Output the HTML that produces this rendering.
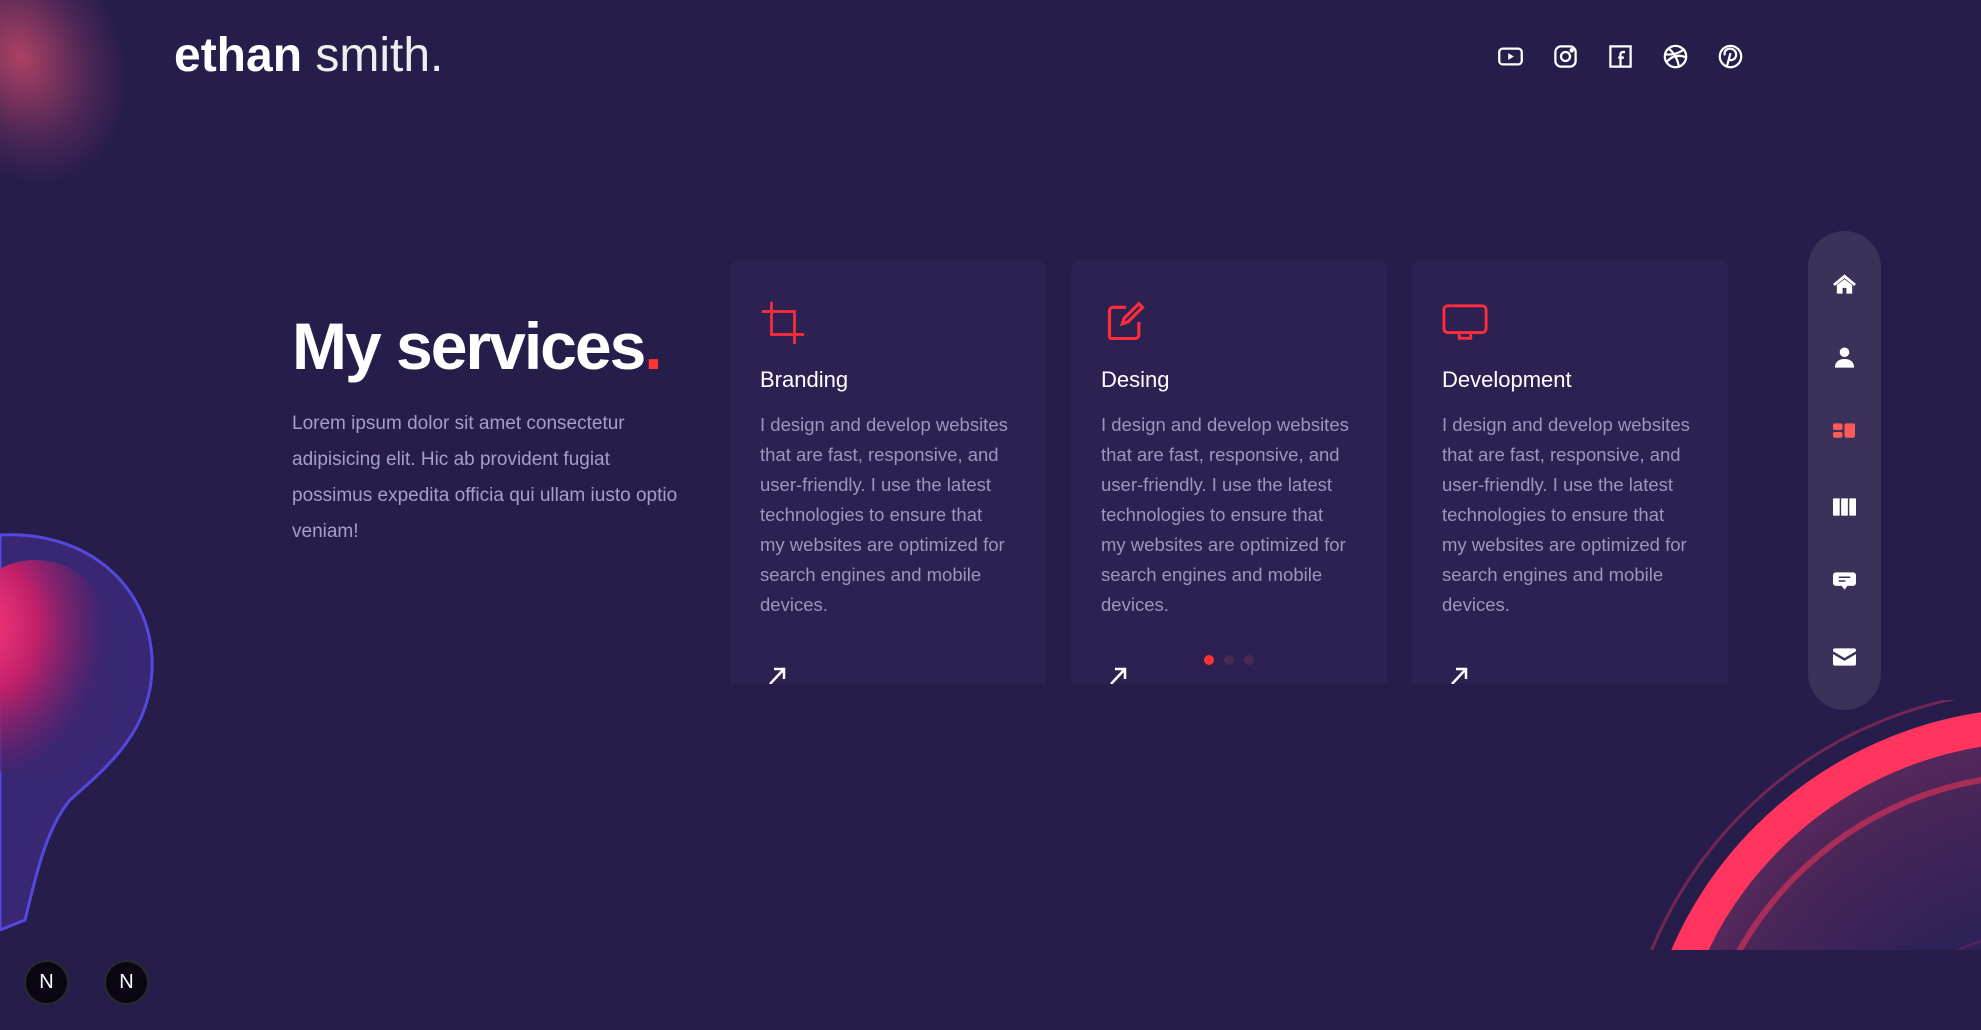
<!DOCTYPE html>
<html><head><meta charset="utf-8"><style>
*{margin:0;padding:0;box-sizing:border-box}
html,body{width:1981px;height:1030px;overflow:hidden}
body{background:#271d4b;font-family:"Liberation Sans",sans-serif;position:relative;color:#fff}
.abs{position:absolute}
.logo{left:174px;top:28px;font-size:48px;white-space:nowrap}
.logo b{font-weight:700}.logo span{font-weight:300;color:#eee}
.red{color:#ff3333}
.soc{top:43px;width:27px;height:27px}
h1{position:absolute;left:292px;top:308px;font-size:66px;font-weight:700;letter-spacing:-2px;white-space:nowrap}
.lead{left:292px;top:406px;width:400px;font-size:19px;line-height:36px;color:#a69ec6;font-weight:300}
.card{top:260px;width:316px;height:424px;background:#2d2152;border-radius:10px 10px 0 0;overflow:hidden}
.card .ic{position:absolute;left:30px;top:40px}
.card h3{position:absolute;left:30px;top:107px;font-size:22px;font-weight:400}
.card p{position:absolute;left:30px;top:150px;white-space:nowrap;font-size:18.5px;line-height:30px;color:#9d95bd;font-weight:300}
.card .ar{position:absolute;left:38px;bottom:0}
.side{left:1808px;top:231px;width:73px;height:479px;background:#3b3159;border-radius:37px}
.side svg{position:absolute;left:25px}
.n{width:45px;height:45px;border-radius:50%;background:#0b0712;border:2px solid #2a2a2a;top:960px;color:#fff;font-size:20px;text-align:center;line-height:41px}
.dot{top:655px;width:10px;height:10px;border-radius:50%}
</style></head><body>
<div class="abs" style="left:-40px;top:-40px;width:170px;height:220px;background:radial-gradient(ellipse at 40% 40%,rgba(230,80,110,.7),rgba(160,60,110,.3) 45%,transparent 70%);transform:rotate(-25deg)"></div>
<svg class="abs" style="left:0;top:500px" width="170" height="460">
<defs><radialGradient id="b" cx="0.2" cy="0.3" r="0.7"><stop offset="0" stop-color="#ff3a7a"/><stop offset=".45" stop-color="#c0206a"/><stop offset="1" stop-color="#3a2470" stop-opacity=".6"/></radialGradient></defs>
<path d="M0 35 C90 30 155 90 152 170 C150 230 110 265 70 300 C45 330 35 380 25 420 L0 430 Z" fill="#3a2a78" stroke="#5a4cf0" stroke-width="3" opacity=".9"/>
<ellipse cx="35" cy="170" rx="90" ry="110" fill="url(#b)"/>
</svg>
<svg class="abs" style="left:1600px;top:700px" width="381" height="250">
<defs><radialGradient id="r" cx="0.5" cy="0.5" r="0.5"><stop offset=".5" stop-color="#2e2258"/><stop offset=".85" stop-color="#4a2557"/><stop offset="1" stop-color="#5a2a5c"/></radialGradient></defs>
<circle cx="440" cy="410" r="385" fill="url(#r)"/>
<circle cx="440" cy="410" r="385" fill="none" stroke="#ff3560" stroke-width="34"/>
<circle cx="440" cy="420" r="345" fill="none" stroke="#c0305a" stroke-width="6" opacity=".8"/>
<circle cx="440" cy="410" r="420" fill="none" stroke="#c03060" stroke-width="3" opacity=".5"/>
<circle cx="450" cy="450" r="220" fill="none" stroke="#7a2a5c" stroke-width="2" opacity=".6"/>
</svg>
<div class="abs logo"><b>ethan</b> <span>smith</span><span class="red">.</span></div>
<svg class="abs soc" style="left:1497px" viewBox="0 0 24 24" fill="none" stroke="#fff" stroke-width="2"><rect x="2" y="5" width="20" height="14" rx="3"/><path d="M10 9l5 3-5 3z" fill="#fff" stroke="none"/></svg>
<svg class="abs soc" style="left:1552px" viewBox="0 0 24 24" fill="none" stroke="#fff" stroke-width="2"><rect x="3" y="3" width="18" height="18" rx="5"/><circle cx="12" cy="12" r="4"/><circle cx="17.5" cy="6.5" r="1" fill="#fff"/></svg>
<svg class="abs soc" style="left:1607px" viewBox="0 0 24 24" fill="none" stroke="#fff" stroke-width="2"><rect x="3" y="3" width="18" height="18"/><path d="M16 8h-2a2 2 0 0 0-2 2v11M10 13h5"/></svg>
<svg class="abs soc" style="left:1662px" viewBox="0 0 24 24" fill="none" stroke="#fff" stroke-width="2"><circle cx="12" cy="12" r="9.5"/><path d="M6 5c5 4 8 10 9 16M3 10c6 1 13-1 17-5M4 17c5-6 11-7 18-4"/></svg>
<svg class="abs soc" style="left:1717px" viewBox="0 0 24 24" fill="none" stroke="#fff" stroke-width="2"><circle cx="12" cy="12" r="9.5"/><path d="M9 20l3-11M10 15c4 1 7-1 7-5 0-3-3-5-5-5-4 0-6 3-5 6"/></svg>
<h1>My services<span class="red">.</span></h1>
<div class="abs lead">Lorem ipsum dolor sit amet consectetur adipisicing elit. Hic ab provident fugiat possimus expedita officia qui ullam iusto optio veniam!</div>
<div class="abs card" style="left:730px">
<svg class="ic" width="46" height="46" viewBox="0 0 24 24" fill="none" stroke="#ff2d3a" stroke-width="1.4"><path d="M6 1v17h17M1 6h17v17"/></svg>
<h3>Branding</h3>
<p>I design and develop websites<br>that are fast, responsive, and<br>user-friendly. I use the latest<br>technologies to ensure that<br>my websites are optimized for<br>search engines and mobile<br>devices.</p>
<svg class="ar" width="22" height="18" viewBox="0 0 22 18" fill="none" stroke="#fff" stroke-width="2.5"><path d="M2 18L16 3M6 3h10v10"/></svg>
</div>
<div class="abs card" style="left:1071px">
<svg class="ic" width="44" height="44" viewBox="0 0 24 24" fill="none" stroke="#ff2d3a" stroke-width="1.7" style="left:33px"><path d="M12 4H5a2 2 0 0 0-2 2v14a1 1 0 0 0 1 1h13a2 2 0 0 0 2-2v-7"/><path d="M19 2l2 2-8 8-3 1 1-3z"/></svg>
<h3>Desing</h3>
<p>I design and develop websites<br>that are fast, responsive, and<br>user-friendly. I use the latest<br>technologies to ensure that<br>my websites are optimized for<br>search engines and mobile<br>devices.</p>
<svg class="ar" width="22" height="18" viewBox="0 0 22 18" fill="none" stroke="#fff" stroke-width="2.5"><path d="M2 18L16 3M6 3h10v10"/></svg>
</div>
<div class="abs card" style="left:1412px">
<svg class="ic" width="46" height="46" viewBox="0 0 24 24" fill="none" stroke="#ff2d3a" stroke-width="1.5"><rect x="1" y="3" width="22" height="14" rx="2"/><path d="M9 17v3h6v-3"/></svg>
<h3>Development</h3>
<p>I design and develop websites<br>that are fast, responsive, and<br>user-friendly. I use the latest<br>technologies to ensure that<br>my websites are optimized for<br>search engines and mobile<br>devices.</p>
<svg class="ar" width="22" height="18" viewBox="0 0 22 18" fill="none" stroke="#fff" stroke-width="2.5"><path d="M2 18L16 3M6 3h10v10"/></svg>
</div>
<div class="abs dot" style="left:1204px;background:#ff3333"></div>
<div class="abs dot" style="left:1224px;background:#4a2a55"></div>
<div class="abs dot" style="left:1244px;background:#4a2a55"></div>
<div class="abs side">
<svg style="top:42px" width="23" height="22" viewBox="0 0 24 22" fill="#fff"><path d="M12 1L0 11l2 2 10-8 10 8 2-2z"/><path d="M4 12l8-6 8 6v9h-6v-6h-4v6H4z"/></svg>
<svg style="top:115px" width="23" height="24" viewBox="0 0 24 24" fill="#fff"><circle cx="12" cy="6" r="5"/><path d="M2 22c0-6 4-9 10-9s10 3 10 9z"/></svg>
<svg style="top:190px" width="23" height="20" viewBox="0 0 24 20" fill="#ff5a5a"><rect x="0" y="2" width="10" height="7" rx="2"/><rect x="0" y="11" width="10" height="6" rx="2"/><rect x="12" y="2" width="11" height="15" rx="2"/></svg>
<svg style="top:266px" width="23" height="20" viewBox="0 0 24 20" fill="#fff"><rect x="0" y="1" width="7" height="18"/><rect x="8.5" y="1" width="7" height="18"/><rect x="17" y="1" width="7" height="18"/></svg>
<svg style="top:340px" width="23" height="22" viewBox="0 0 24 22" fill="#fff"><path d="M3 1h18a3 3 0 0 1 3 3v8a3 3 0 0 1-3 3h-6l-3 4-3-4H3a3 3 0 0 1-3-3V4a3 3 0 0 1 3-3z"/><path d="M6 6h12M6 10h7" stroke="#3b3159" stroke-width="1.6"/></svg>
<svg style="top:417px" width="23" height="18" viewBox="0 0 24 18" fill="#fff"><path d="M2 0h20a2 2 0 0 1 2 2v1l-12 7L0 3V2a2 2 0 0 1 2-2z"/><path d="M0 6l12 7 12-7v10a2 2 0 0 1-2 2H2a2 2 0 0 1-2-2z"/></svg>
</div>
<div class="abs n" style="left:24px">N</div>
<div class="abs n" style="left:104px">N</div>
</body></html>
